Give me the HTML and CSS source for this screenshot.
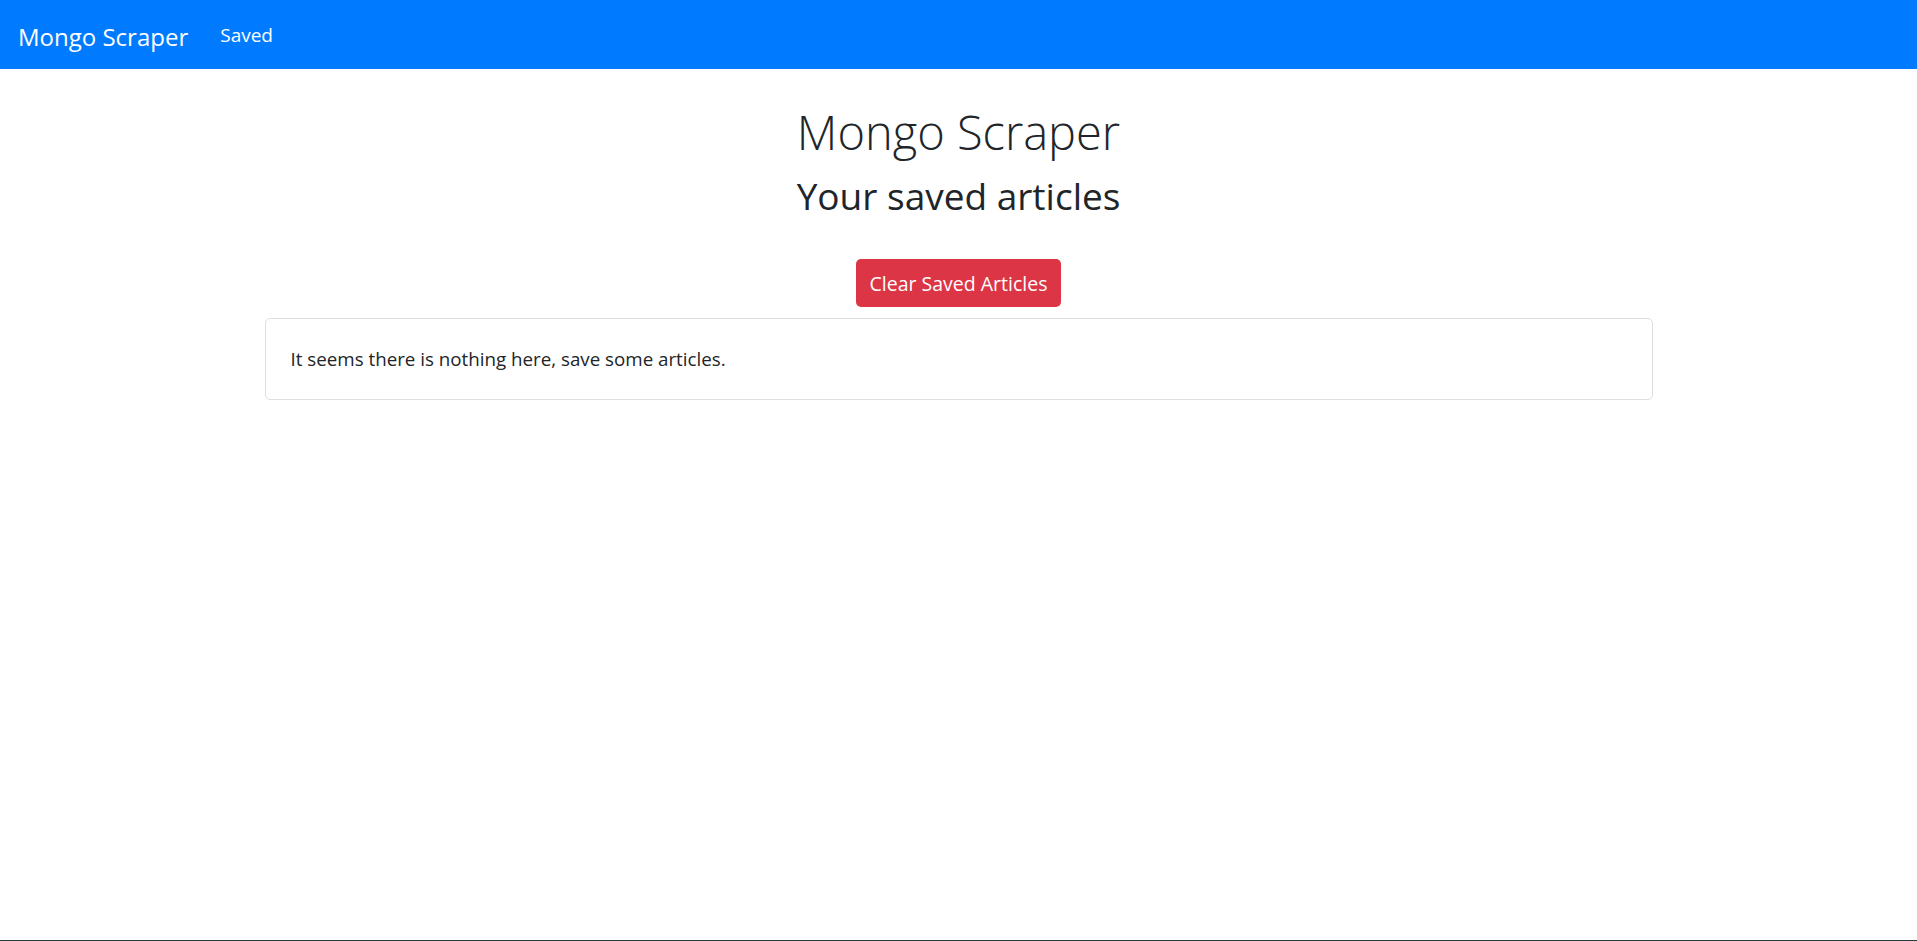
FILE: index.html
```html
<!DOCTYPE html>
<html lang="en">
<head>
    <meta charset="UTF-8">
    <meta name="viewport" content="width=device-width, initial-scale=1.0">
    <title>Mongo Scraper</title>
    <link rel="stylesheet" href="styles.css">
</head>
<body>
    <nav class="navbar">
        <a class="brand" href="/">Mongo Scraper</a>
        <a class="nav-link" href="/saved">Saved</a>
    </nav>

    <div class="container">
        <h1 class="title">Mongo Scraper</h1>
        <h3 class="subtitle">Your saved articles</h3>
        <button id="clear-btn" class="btn-danger">Clear Saved Articles</button>
        <div id="articles">
            <div class="card">
                <p>It seems there is nothing here, save some articles.</p>
            </div>
        </div>
    </div>

    <div class="taskbar"></div>
</body>
</html>
```

FILE: styles.css
```css
body {
    margin: 0;
    font-family: "Open Sans", "Noto Sans", sans-serif;
    font-size: 20px;
    line-height: 1.5;
    color: #212529;
    background: #fff;
}

a {
    text-decoration: none;
}

.navbar {
    display: flex;
    align-items: center;
    height: 69px;
    padding: 4px 20px 0 18px;
    background-color: #007bff;
    box-sizing: border-box;
}

.brand {
    color: #fff;
    font-size: 24px;
    margin-right: 22px;
}

.nav-link {
    color: #fff;
    font-size: 19px;
    padding: 0 10px 2px;
}

.container {
    width: 1388px;
    margin: 0 auto;
    display: flex;
    flex-direction: column;
    align-items: center;
}

.title {
    font-weight: 300;
    font-size: 47px;
    line-height: 60px;
    margin: 33px 0 0;
}

.subtitle {
    font-weight: 400;
    font-size: 37px;
    line-height: 44px;
    margin: 12px 0 0;
}

#clear-btn {
    margin-top: 41px;
    height: 48px;
    padding: 0 14px;
    font-family: inherit;
    font-size: 19.5px;
    color: #fff;
    background-color: #dc3545;
    border: none;
    border-radius: 5px;
}

#articles {
    align-self: stretch;
    margin-top: 11px;
}

.card {
    border: 1px solid rgba(0, 0, 0, 0.125);
    border-radius: 5px;
    padding: 25px;
}

.card p {
    margin: 0;
    font-size: 18.75px;
    line-height: 30px;
}

.taskbar {
    position: fixed;
    left: 0;
    right: 0;
    bottom: 0;
    height: 1px;
    background: #253b40;
}
```
